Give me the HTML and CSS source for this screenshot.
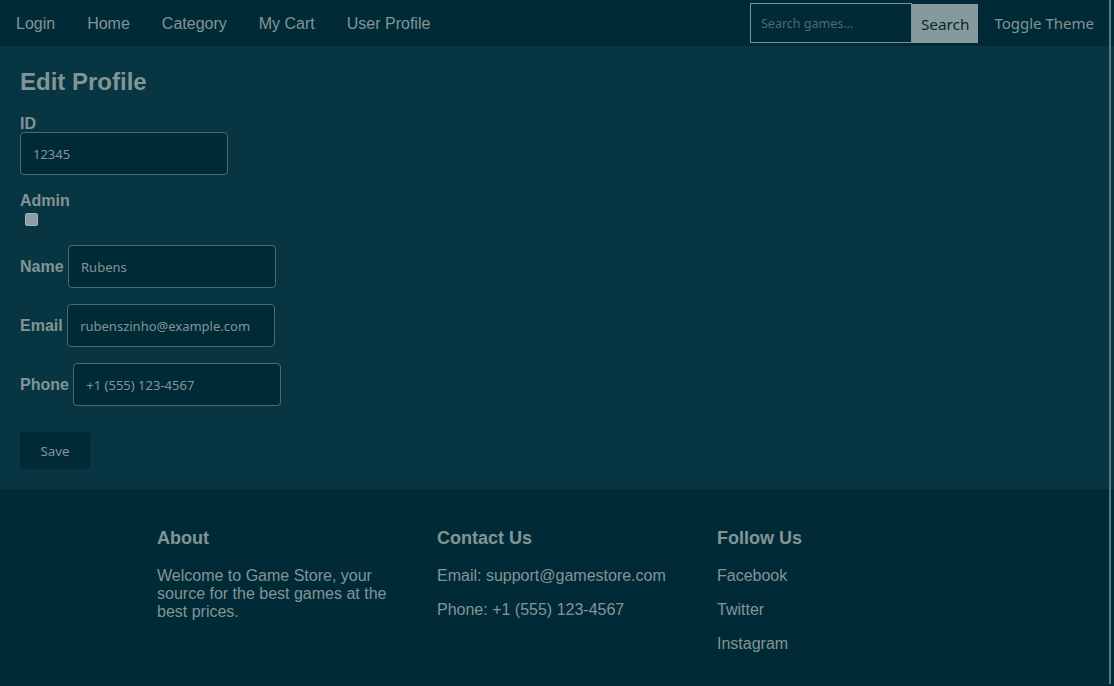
FILE: index.html
```html
<!DOCTYPE html>
<html lang="en">
<head>
<meta charset="utf-8">
<title>Edit Profile - Game Store</title>
<link rel="stylesheet" href="styles.css">
</head>
<body>
<nav class="topnav">
  <ul class="nav-links">
    <li><a href="#">Login</a></li>
    <li><a href="#">Home</a></li>
    <li><a href="#">Category</a></li>
    <li><a href="#">My Cart</a></li>
    <li><a href="#">User Profile</a></li>
  </ul>
  <div class="nav-right">
    <form class="search">
      <input class="search-input" type="text" placeholder="Search games...">
      <button class="search-btn" type="button">Search</button>
    </form>
    <button class="theme-btn" type="button">Toggle Theme</button>
  </div>
</nav>

<main class="content">
  <h2 class="page-title">Edit Profile</h2>
  <form class="profile-form">
    <div class="group">
      <label class="block-label">ID</label>
      <input class="field" type="text" value="12345">
    </div>
    <div class="group group-check">
      <label class="block-label">Admin</label>
      <input class="check" type="checkbox">
    </div>
    <div class="group">
      <label class="inline-label">Name</label> <input class="field" type="text" value="Rubens">
    </div>
    <div class="group">
      <label class="inline-label">Email</label> <input class="field" type="text" value="rubenszinho@example.com">
    </div>
    <div class="group">
      <label class="inline-label">Phone</label> <input class="field" type="text" value="+1 (555) 123-4567">
    </div>
    <button class="save-btn" type="button">Save</button>
  </form>
</main>

<footer class="footer">
  <div class="footer-inner">
    <section class="col">
      <h3>About</h3>
      <p>Welcome to Game Store, your source for the best games at the best prices.</p>
    </section>
    <section class="col">
      <h3>Contact Us</h3>
      <p>Email: support@gamestore.com</p>
      <p>Phone: +1 (555) 123-4567</p>
    </section>
    <section class="col">
      <h3>Follow Us</h3>
      <p><a href="#">Facebook</a></p>
      <p><a href="#">Twitter</a></p>
      <p><a href="#">Instagram</a></p>
    </section>
  </div>
</footer>
<div class="scroll-thumb"></div>
</body>
</html>
```

FILE: styles.css
```css
* { box-sizing: border-box; }

html, body {
  margin: 0;
  padding: 0;
}

body {
  background: #073642;
  color: #839496;
  font-family: "Liberation Sans", Arial, sans-serif;
  font-size: 16px;
}

a { color: #839496; text-decoration: none; }

.topnav {
  display: flex;
  align-items: center;
  justify-content: space-between;
  height: 46px;
  background: #002b36;
  padding-right: 4px;
}

.nav-links {
  display: flex;
  list-style: none;
  margin: 0;
  padding: 0;
}

.nav-links a {
  display: block;
  padding: 2px 16px 0;
  line-height: 44px;
  font-size: 16px;
}

.nav-right {
  display: flex;
  align-items: center;
}

.search {
  display: flex;
  height: 40px;
  margin: 0;
}

.search-input {
  width: 162px;
  height: 40px;
  background: #002b36;
  border: 1px solid #7d9396;
  padding: 0 10px;
  color: #839496;
  font-family: "Noto Sans", sans-serif;
  font-size: 12.5px;
  outline: none;
}

.search-input::placeholder { color: #4f6a70; }

.search-btn {
  height: 39px;
  margin-top: 1px;
  padding: 0 9px;
  border: none;
  background: #869a9c;
  color: #002b36;
  font-family: "Noto Sans", sans-serif;
  font-size: 15.3px;
}

.theme-btn {
  background: transparent;
  border: none;
  padding: 0 16px;
  color: #839496;
  font-family: "Noto Sans", sans-serif;
  font-size: 15px;
  height: 40px;
}

.content {
  padding: 20px;
}

.page-title {
  margin: 0 0 18px;
  padding-top: 2px;
  font-size: 24px;
  font-weight: bold;
  line-height: 28px;
}

.group {
  margin-bottom: 16px;
}

.group-check {
  margin-bottom: 19px;
}

.block-label {
  display: block;
  font-weight: bold;
  padding-top: 1px;
  line-height: 17px;
}

.inline-label {
  font-weight: bold;
  vertical-align: middle;
}

.field {
  width: 208px;
  height: 43px;
  padding: 0 12px;
  background: #002b36;
  border: 1px solid #4e6a70;
  border-radius: 4px;
  color: #839496;
  font-family: "Noto Sans", sans-serif;
  font-size: 13px;
  outline: none;
  vertical-align: middle;
}

.check {
  appearance: none;
  -webkit-appearance: none;
  display: block;
  width: 13px;
  height: 13px;
  margin: 4px 0 0 5px;
  background: #8a9ea3;
  border: 1px solid #a3b3b6;
  border-radius: 2px;
}

.save-btn {
  margin-top: 10px;
  width: 70px;
  height: 37px;
  background: #002b36;
  border: none;
  border-radius: 4px;
  color: #839496;
  font-family: "Noto Sans", sans-serif;
  font-size: 13.33px;
}

.footer {
  background: #002b36;
  padding: 20px 0;
}

.footer-inner {
  display: flex;
  width: 840px;
  margin: 0 auto;
}

.col {
  flex: 1;
  padding: 0 20px;
}

.col h3 {
  margin: 18px 0;
  font-size: 18px;
  line-height: 22px;
}

.col p {
  margin: 0 0 16px;
  line-height: 18px;
}

.scroll-thumb {
  position: fixed;
  top: 0;
  bottom: 2px;
  right: 3px;
  width: 2px;
  background: #5c7c82;
}
```
